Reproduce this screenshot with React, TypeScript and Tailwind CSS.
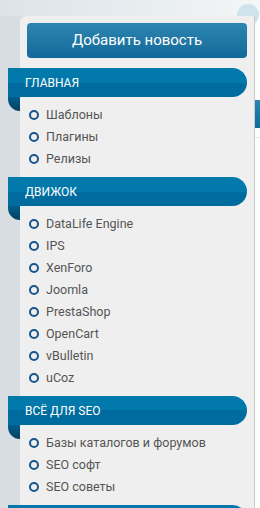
const sections = [
  { title: "Главная", items: ["Шаблоны", "Плагины", "Релизы"] },
  {
    title: "Движок",
    items: [
      "DataLife Engine",
      "IPS",
      "XenForo",
      "Joomla",
      "PrestaShop",
      "OpenCart",
      "vBulletin",
      "uCoz",
    ],
  },
  {
    title: "Всё для SEO",
    items: ["Базы каталогов и форумов", "SEO софт", "SEO советы"],
  },
  { title: "", items: [] },
];

function Header({ title }: { title: string }) {
  return (
    <div className="relative -ml-[12px] mr-[7px]">
      <div className="h-[29px] flex items-center pl-[17px] rounded-tl-[9px] rounded-r-full bg-[linear-gradient(#0279ab_50%,#006b9e_50%)]">
        <span className="text-white text-[12px] uppercase">{title}</span>
      </div>
      <div className="absolute left-0 top-[29px] w-[12px] h-[14px] rounded-bl-[12px] bg-[linear-gradient(#005f8e,#063f60)]" />
    </div>
  );
}

export default function App() {
  return (
    <div
      className="relative w-[260px] h-[508px] overflow-hidden flex flex-col bg-[#d8dde1]"
      style={{ fontFamily: "Roboto, 'Noto Sans', sans-serif" }}
    >
      <div className="h-[16px] shrink-0 bg-[linear-gradient(90deg,#dde3e8,#e9eef1_60%,#f4f6f7)]" />
      <div className="absolute left-[237px] top-[4px] w-[22px] h-[22px] rounded-full bg-[#cfe3ec]" />

      <div className="flex flex-1">
        <div className="w-[20px] shrink-0" />
        <div className="relative w-[235px] shrink-0 bg-[#efefef] border-r border-[#c9c9c9] rounded-tl-[6px] pt-[7px]">
          <button className="ml-[7px] w-[220px] h-[35px] rounded-[4px] bg-[linear-gradient(#2d85b1,#136a9a)] text-white text-[15px] flex items-center justify-center">
            Добавить новость
          </button>
          <div className="mt-[10px]">
            {sections.map((s, i) => (
              <div key={i}>
                <Header title={s.title} />
                <ul className="py-[7px] pl-[9px]">
                  {s.items.map((item) => (
                    <li key={item} className="h-[22px] flex items-center gap-[7px]">
                      <span className="w-[10px] h-[10px] rounded-full border-[2.5px] border-[#17558d] shrink-0" />
                      <span className="text-[12.5px] text-[#555555]">{item}</span>
                    </li>
                  ))}
                </ul>
              </div>
            ))}
          </div>
        </div>
        <div className="flex-1 bg-white flex flex-col">
          <div className="mt-[84px] h-[28px] bg-[linear-gradient(#2b86b3,#10699a)]" />
          <div className="mt-[9px] h-px bg-[#e6e6e6]" />
        </div>
      </div>
    </div>
  );
}
